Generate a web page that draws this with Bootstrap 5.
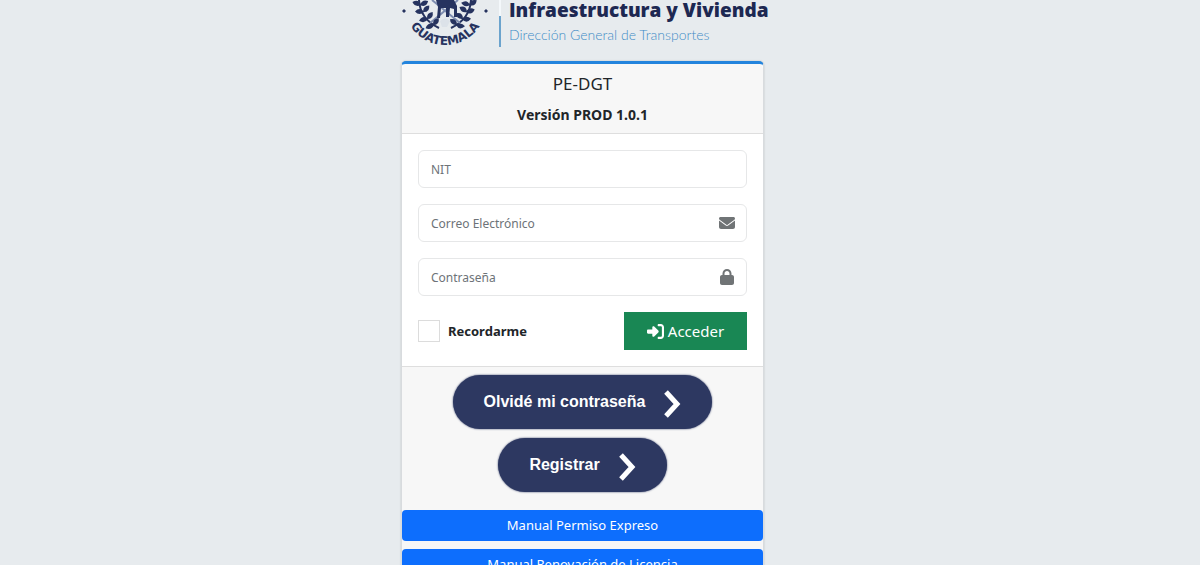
<!DOCTYPE html>
<html lang="es">
<head>
<meta charset="utf-8">
<meta name="viewport" content="width=device-width, initial-scale=1">
<title>PE-DGT</title>
<link href="https://cdn.jsdelivr.net/npm/bootstrap@5.3.0/dist/css/bootstrap.min.css" rel="stylesheet">
<style>
body { background: #e7ebee; font-family: "Noto Sans", "Open Sans", sans-serif; color: #212529; padding-right: 35px; }
.login-box { width: 100%; max-width: 363px; }
.brand { height: 61px; }
.emblem { width: 88px; height: 50px; flex: none; }
.brand-text { border-left: 2px solid #6ba3cd; margin-left: 10px; padding-left: 8px; height: 47px; white-space: nowrap; border-image: linear-gradient(#f4f8fb 35%, #6ba3cd 35%) 1; }
.brand-title { font-family: "Open Sans", sans-serif; font-weight: 800; font-size: 19px; line-height: 20px; color: #1d2852; }
.brand-sub { font-family: Lato, sans-serif; font-weight: 300; font-size: 14px; line-height: 30px; color: #3f8cc6; }
.login-card { border: 1px solid #d8dbde; border-top: 3px solid #2384dd; border-radius: 5px; box-shadow: 0 0 2px #0003; }
.login-card .card-header, .login-card .card-footer { background: #f7f7f7; border-color: #dedede; }
.app-name { font-size: 17px; line-height: 24px; }
.app-version { font-size: 14px; line-height: 21px; }
.login-form { padding: 16px; }
.field { border-color: #e6e7e8; font-size: 12px; height: 38px; }
.field::placeholder { color: #6d7378; }
.field-icon { width: 16px; height: 16px; margin-right: 12px; color: #707476; pointer-events: none; }
.tick { width: 22px; height: 22px; border-color: #dcdcdc; }
.tick[type=checkbox] { border-radius: 0; }
.tick-label { font-size: 13px; line-height: 22px; }
.btn-enter { width: 123px; height: 38px; background: #198754; color: #fff; border-radius: 0; font-size: 15px; }
.pills { gap: 9px; margin-bottom: 18px; }
.pill { height: 54px; background: #2d3861; color: #fff; border-radius: 27px; font: bold 16px "Liberation Sans", Arial, sans-serif; padding: 0 31px; box-shadow: 0 0 2px #2d3861; }
.pill svg { width: 17px; height: 28px; margin-left: 19px; margin-top: 4px; }
.manual { background: #0d6efd; color: #fff; font-size: 13px; line-height: 21px; padding: 5px 8px; border-radius: 4px; }
.btn-enter:hover, .pill:hover, .manual:hover { color: #fff; background: #17407f; }
</style>
</head>
<body class="vh-100 overflow-hidden">
<main class="login-box mx-auto">
  <header class="brand d-flex align-items-start">
    <svg class="emblem" viewBox="402 0 88 50" role="img" aria-label="Escudo de Guatemala">
      <defs>
        <path id="arc" d="M405 4A41 41 0 0 0 487 4"/>
        <path id="leaf" d="M0 0Q4-5 9-1Q5 5 0 0Z"/>
      </defs>
      <g fill="none" stroke="#26335f" stroke-width="2">
        <path d="M420 0Q421 19 440 28M472 0Q471 19 452 28"/>
        <path stroke="#7e8db0" d="M431 23L459 0M461 23L433 0"/>
      </g>
      <g fill="#26335f">
        <use href="#leaf" transform="translate(422 5) rotate(205)"/>
        <use href="#leaf" transform="translate(421 5) rotate(-20)"/>
        <use href="#leaf" transform="translate(425 12) rotate(190)"/>
        <use href="#leaf" transform="translate(424 12) rotate(-40)"/>
        <use href="#leaf" transform="translate(429 19) rotate(175)"/>
        <use href="#leaf" transform="translate(428 19) rotate(-45)"/>
        <use href="#leaf" transform="translate(435 25) rotate(165)"/>
        <use href="#leaf" transform="translate(434 25) rotate(-45)"/>
        <use href="#leaf" transform="translate(470 5) rotate(-25)"/>
        <use href="#leaf" transform="translate(471 5) rotate(200)"/>
        <use href="#leaf" transform="translate(467 12) rotate(-10)"/>
        <use href="#leaf" transform="translate(468 12) rotate(220)"/>
        <use href="#leaf" transform="translate(463 19) rotate(5)"/>
        <use href="#leaf" transform="translate(464 19) rotate(225)"/>
        <use href="#leaf" transform="translate(457 25) rotate(15)"/>
        <use href="#leaf" transform="translate(458 25) rotate(225)"/>
        <path d="M437 0L455 0L458 6L458 17L455 17L455 9L451 8L450 17L447 17L447 8L442 8L441 18L438 18L439 7Z"/>
        <path d="M405 9l1 1 1 1-1 1-1 1-1-1-1-1 1-1ZM487 9l1 1 1 1-1 1-1 1-1-1-1-1 1-1Z"/>
      </g>
      <path d="M441 21Q446 16 451 21L448 27L443 27Z" fill="#dce2e9"/>
      <text font-family="DejaVu Sans, sans-serif" font-weight="700" font-size="12" fill="#26335f" text-anchor="middle"><textPath href="#arc" startOffset="50%">GUATEMALA</textPath></text>
    </svg>
    <div class="brand-text">
      <div class="brand-title">Infraestructura y Vivienda</div>
      <div class="brand-sub">Dirección General de Transportes</div>
    </div>
  </header>

  <section class="card login-card">
    <div class="card-header text-center px-3 pt-2 pb-2">
      <h1 class="app-name fw-normal mb-2">PE-DGT</h1>
      <p class="app-version fw-bold mb-0">Versión PROD 1.0.1</p>
    </div>
    <form class="card-body login-form">
      <input class="form-control field mb-3" type="text" placeholder="NIT" aria-label="NIT">
      <div class="position-relative mb-3">
        <input class="form-control field" type="email" placeholder="Correo Electrónico" aria-label="Correo Electrónico">
        <svg class="field-icon position-absolute top-50 end-0 translate-middle-y" viewBox="0 0 512 512" fill="currentColor" aria-hidden="true"><path d="M48 64C21.500 64 0 85.500 0 112c0 15 7 29 19 38l218 163c11 9 27 9 38 0l218-163c12-9 19-23 19-38 0-26.500-21.500-48-48-48H48zM0 176v208c0 35 29 64 64 64h384c35 0 64-29 64-64V176L294 339c-23 17-54 17-77 0L0 176z"/></svg>
      </div>
      <div class="position-relative mb-3">
        <input class="form-control field" type="password" placeholder="Contraseña" aria-label="Contraseña">
        <svg class="field-icon position-absolute top-50 end-0 translate-middle-y" viewBox="0 0 448 512" fill="currentColor" aria-hidden="true"><path d="M144 144v48h160v-48c0-44-36-80-80-80s-80 36-80 80zM80 192v-48C80 64.500 144.500 0 224 0s144 64.500 144 144v48h16c35 0 64 29 64 64v192c0 35-29 64-64 64H64c-35 0-64-29-64-64V256c0-35 29-64 64-64h16z"/></svg>
      </div>
      <div class="d-flex justify-content-between align-items-center">
        <div class="d-flex align-items-center gap-2">
          <input class="form-check-input tick m-0" type="checkbox" id="remember">
          <label class="tick-label fw-bold" for="remember">Recordarme</label>
        </div>
        <button class="btn btn-enter d-flex align-items-center justify-content-center gap-1 p-0" type="submit">
          <svg width="17" height="17" viewBox="0 0 512 512" fill="currentColor" aria-hidden="true"><path d="M217.900 105.900L340.700 228.700c7.200 7.200 11.300 17.100 11.300 27.300s-4.100 20.100-11.300 27.300L217.900 406.100c-6.400 6.400-15 9.900-24 9.900-18.700 0-33.900-15.200-33.900-33.900V320H32c-17.700 0-32-14.300-32-32v-64c0-17.700 14.300-32 32-32h128v-62.100c0-18.700 15.200-33.900 33.900-33.900 9 0 17.600 3.600 24 9.900zM352 416h64c17.700 0 32-14.300 32-32V128c0-17.700-14.300-32-32-32h-64c-17.700 0-32-14.300-32-32s14.300-32 32-32h64c53 0 96 43 96 96v256c0 53-43 96-96 96h-64c-17.700 0-32-14.300-32-32s14.300-32 32-32z"/></svg>
          <span>Acceder</span>
        </button>
      </div>
    </form>
    <div class="card-footer px-0 py-2 d-flex flex-column">
      <div class="pills d-flex flex-column align-items-center">
        <button class="btn pill border-0 d-flex align-items-center" type="button">Olvidé mi contraseña
          <svg viewBox="0 0 17 28" fill="none" stroke="currentColor" stroke-width="5" aria-hidden="true"><path d="M2 2L13 14L2 26"/></svg>
        </button>
        <button class="btn pill border-0 d-flex align-items-center" type="button">Registrar
          <svg viewBox="0 0 17 28" fill="none" stroke="currentColor" stroke-width="5" aria-hidden="true"><path d="M2 2L13 14L2 26"/></svg>
        </button>
      </div>
      <div class="d-grid gap-2">
        <a class="btn manual border-0" href="#">Manual Permiso Expreso</a>
        <a class="btn manual border-0" href="#">Manual Renovación de Licencia</a>
      </div>
    </div>
  </section>
</main>
<script src="https://cdn.jsdelivr.net/npm/bootstrap@5.3.0/dist/js/bootstrap.bundle.min.js"></script>
</body>
</html>
